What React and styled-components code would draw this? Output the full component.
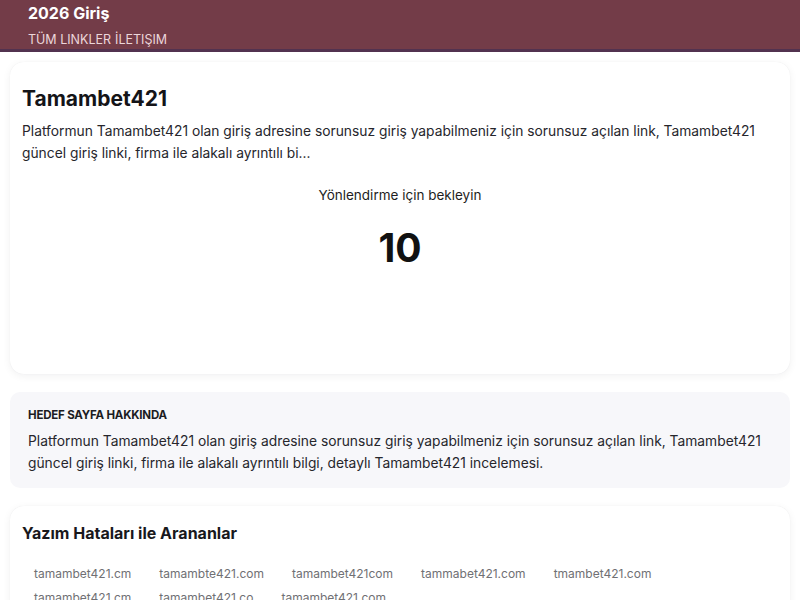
import React from "react";
import styled, { createGlobalStyle } from "styled-components";

const Global = createGlobalStyle`
  html, body { margin: 0; padding: 0; background: #fff; }
  body { font-family: Inter, "Noto Sans", sans-serif; color: #1f1f24; }
  * { box-sizing: border-box; }
`;

const Header = styled.header`
  background: #733c48;
  border-bottom: 3px solid #52324f;
  padding: 3px 28px 3px;
  height: 52px;
  display: flex;
  flex-direction: column;
  justify-content: flex-start;
`;

const Brand = styled.div`
  color: #fff;
  font-weight: 700;
  font-size: 16px;
  line-height: 20px;
`;

const Nav = styled.nav`
  display: flex;
  gap: 4px;
  margin-top: 9px;
`;

const NavLink = styled.a`
  color: #ecd6da;
  font-size: 12.5px;
  line-height: 16px;
  text-transform: uppercase;
  text-decoration: none;
`;

const Main = styled.main`
  padding: 10px 10px 0;
  display: flex;
  flex-direction: column;
  gap: 18px;
`;

const Card = styled.section`
  background: #fff;
  border-radius: 14px;
  box-shadow: 0 2px 8px rgba(20, 20, 40, 0.06), 0 0 1px rgba(20, 20, 40, 0.08);
  padding: ${(p) => p.$pad || "20px 12px"};
  height: ${(p) => p.$h || "auto"};
`;

const Title = styled.h1`
  margin: 0 0 6px;
  font-size: 21px;
  line-height: 30px;
  font-weight: 700;
  color: #141418;
`;

const Para = styled.p`
  margin: 0;
  font-size: 13.8px;
  line-height: 22px;
  color: #26262c;
`;

const Center = styled.div`
  display: flex;
  flex-direction: column;
  align-items: center;
  margin-top: 22px;
`;

const Wait = styled.div`
  font-size: 13.5px;
  line-height: 18px;
  color: #1e1e22;
`;

const Count = styled.div`
  font-size: 39px;
  font-weight: 700;
  line-height: 48px;
  margin-top: 20px;
  color: #111;
`;

const InfoBox = styled.section`
  background: #f7f7fa;
  border-radius: 10px;
  padding: 16px 18px 14px;
`;

const InfoLabel = styled.h3`
  margin: 0 0 8px;
  font-size: 11.5px;
  font-weight: 700;
  letter-spacing: -0.2px;
  text-transform: uppercase;
  color: #1c1c22;
`;

const SubTitle = styled.h2`
  margin: 0 0 18px;
  font-size: 16px;
  font-weight: 700;
  line-height: 22px;
  color: #18181c;
`;

const Tags = styled.div`
  display: flex;
  flex-wrap: wrap;
  gap: 0 4px;
`;

const Tag = styled.span`
  padding: 3px 12px;
  font-size: 12px;
  line-height: 18px;
  color: #707074;
`;

const tags = [
  "tamambet421.cm",
  "tamambte421.com",
  "tamambet421com",
  "tammabet421.com",
  "tmambet421.com",
  "tamambet421.cm",
  "tamambet421.co",
  "tamambet421.com",
];

export default function App() {
  return (
    <>
      <Global />
      <Header>
        <Brand>2026 Giriş</Brand>
        <Nav>
          <NavLink href="#">Tüm Linkler</NavLink>
          <NavLink href="#">İletişim</NavLink>
        </Nav>
      </Header>
      <Main>
        <Card $h="312px" $pad="22px 12px">
          <Title>Tamambet421</Title>
          <Para>
            Platformun Tamambet421 olan giriş adresine sorunsuz giriş yapabilmeniz için sorunsuz açılan link, Tamambet421 güncel giriş linki, firma ile alakalı ayrıntılı bi...
          </Para>
          <Center>
            <Wait>Yönlendirme için bekleyin</Wait>
            <Count>10</Count>
          </Center>
        </Card>
        <InfoBox>
          <InfoLabel>Hedef Sayfa Hakkında</InfoLabel>
          <Para>
            Platformun Tamambet421 olan giriş adresine sorunsuz giriş yapabilmeniz için sorunsuz açılan link, Tamambet421 güncel giriş linki, firma ile alakalı ayrıntılı bilgi, detaylı Tamambet421 incelemesi.
          </Para>
        </InfoBox>
        <Card $pad="16px 12px">
          <SubTitle>Yazım Hataları ile Arananlar</SubTitle>
          <Tags>
            {tags.map((t, i) => (
              <Tag key={i}>{t}</Tag>
            ))}
          </Tags>
        </Card>
      </Main>
    </>
  );
}
